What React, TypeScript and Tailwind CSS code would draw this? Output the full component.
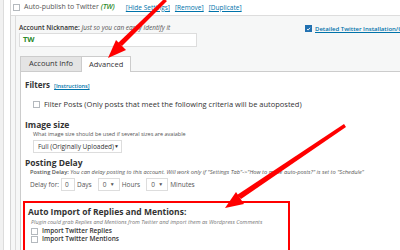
import React from "react";

function Box({ checked = false }: { checked?: boolean }) {
  return (
    <span
      className={
        "inline-flex h-[7px] w-[7px] shrink-0 items-center justify-center border " +
        (checked ? "border-[#2271b1] bg-[#2271b1]" : "border-[#b4b9be] bg-white")
      }
    >
      {checked && (
        <svg viewBox="0 0 10 10" className="h-[6px] w-[6px]">
          <path d="M2 5 L4.2 7.2 L8 2.6" stroke="#fff" strokeWidth="1.8" fill="none" />
        </svg>
      )}
    </span>
  );
}

function Select({ label, w }: { label: string; w: string }) {
  return (
    <span className={"inline-flex h-[13px] shrink-0 items-center justify-between whitespace-nowrap border border-[#ddd] bg-white px-[4px] " + w}>
      <span>{label}</span>
      <span className="text-[5px]">▼</span>
    </span>
  );
}

export default function App() {
  return (
    <div className="relative flex h-[250px] w-[400px] overflow-hidden bg-white text-[#444] [font-family:'Open_Sans',sans-serif]">
      {/* left admin gutter */}
      <div className="w-[4px] shrink-0 border-r border-[#dcdcdc] bg-[#f1f1f1]" />
      <div className="w-[6px] shrink-0 bg-white" />

      <div className="flex min-w-0 flex-1 flex-col border-l border-[#d5d5d5]">
        {/* auto-publish row */}
        <div className="flex h-[16px] shrink-0 items-center gap-[3px] whitespace-nowrap border-b border-[#ddd] bg-white pl-[2px] text-[7px]">
          <Box />
          <span className="ml-[1px] text-[#555]">
            Auto-publish to Twitter <i className="font-semibold text-[#2a8a2a]">(TW)</i>
          </span>
          <span className="ml-[8px] text-[6.5px] text-[#0073aa] underline">[Hide Settings]</span>
          <span className="ml-[2px] text-[6.5px] text-[#0073aa] underline">[Remove]</span>
          <span className="ml-[2px] text-[6.5px] text-[#0073aa] underline">[Duplicate]</span>
        </div>

        {/* settings body */}
        <div className="flex flex-1 bg-[#f6f7f7] pl-[4px]">
          <div className="flex flex-1 flex-col border-l border-[#dcdcdc] pt-[7px]">
            <div className="flex pl-[3px]">
              <div className="flex w-[178px] shrink-0 flex-col">
                <div className="whitespace-nowrap text-[6.5px] leading-[9px] text-[#333]">
                  <b className="font-semibold">Account Nickname:</b> <i className="text-[#555]">Just so you can easily identify it</i>
                </div>
                <div className="mt-[1px] flex h-[14px] items-center border border-[#ddd] bg-white px-[3px] text-[7.5px] font-bold text-[#2a8a2a]">
                  TW
                </div>
              </div>
              <div className="ml-[108px] flex shrink-0 items-start gap-[3px] pt-[2px]">
                <Box checked />
                <span className="whitespace-nowrap text-[6px] font-semibold leading-[8px] text-[#0073aa] underline">
                  Detailed Twitter Installation/Configuration Instructions
                </span>
              </div>
            </div>

            {/* tabs */}
            <div className="mt-[9px] flex pl-[4px]">
              <div className="flex h-[15px] items-center border border-b-0 border-[#ccc] bg-[#e4e4e4] px-[8px] text-[7.5px] text-[#333]">
                Account Info
              </div>
              <div className="relative -mb-[1px] flex h-[16px] items-center border border-b-0 border-l-0 border-[#ccc] bg-white px-[7px] text-[7.5px] text-[#333]">
                Advanced
              </div>
            </div>

            {/* tab content */}
            <div className="ml-[4px] flex flex-1 flex-col border-l border-t border-[#ccc] bg-white pl-[4px] pt-[7px] text-[#333]">
              <div className="flex items-baseline gap-[4px]">
                <span className="text-[8px] font-bold">Filters</span>
                <span className="text-[5.5px] font-semibold text-[#0073aa] underline">[Instructions]</span>
              </div>
              <div className="mt-[8px] flex items-center gap-[4px] whitespace-nowrap pl-[8px] text-[7.5px]">
                <Box />
                <span>Filter Posts (Only posts that meet the following criteria will be autoposted)</span>
              </div>

              <div className="mt-[9px] text-[8.5px] font-bold leading-[11px]">Image size</div>
              <div className="whitespace-nowrap pl-[8px] text-[5.5px] leading-[9px] text-[#555]">
                What image size should be used if several sizes are avaiable
              </div>
              <div className="mt-[1px] flex pl-[8px] text-[6.5px]">
                <Select label="Full (Originally Uploaded)" w="w-[89px]" />
              </div>

              <div className="mt-[4px] text-[8.5px] font-bold leading-[11px]">Posting Delay</div>
              <div className="whitespace-nowrap pl-[5px] text-[5.7px] leading-[9px] text-[#555]">
                <b className="font-semibold">Posting Delay:</b>{" "}
                <i>You can delay posting to this account. Will work only if "Settings Tab"-&gt;"How to make auto-posts?" is set to "Schedule"</i>
              </div>
              <div className="mt-[1px] flex items-center gap-[2px] whitespace-nowrap pl-[5px] text-[6.5px] text-[#555]">
                <span>Delay for:</span>
                <span className="flex h-[13px] w-[14px] items-center border border-[#ddd] pl-[3px]">0</span>
                <span className="mr-[4px]">Days</span>
                <Select label="0" w="w-[22px]" />
                <span className="mr-[4px]">Hours</span>
                <Select label="0" w="w-[22px]" />
                <span>Minutes</span>
              </div>

              <div className="mt-[10px] ml-[-2px] flex h-[60px] w-[267px] flex-col border-2 border-[#f00] pl-[3px] pt-[3px]">
                <div className="text-[8.5px] font-bold leading-[11px]">Auto Import of Replies and Mentions:</div>
                <div className="whitespace-nowrap pl-[3px] text-[5.5px] italic leading-[10px] text-[#777]">
                  Plugin could grab Replies and Mentions from Twitter and import them as Wordpress Comments
                </div>
                <div className="flex items-center gap-[4px] pl-[3px] text-[6.5px] font-semibold leading-[8px]">
                  <Box />
                  <span>Import Twitter Replies</span>
                </div>
                <div className="flex items-center gap-[4px] pl-[3px] text-[6.5px] font-semibold leading-[8px]">
                  <Box />
                  <span>Import Twitter Mentions</span>
                </div>
              </div>
            </div>
          </div>
        </div>
      </div>

      {/* red annotation arrows */}
      <svg className="pointer-events-none absolute left-0 top-0" width="400" height="250" viewBox="0 0 400 250">
        <polygon points="164,-1 167,1 122,46 118,43" fill="#f00" />
        <polygon points="108,58 126,50 116,40" fill="#f00" />
        <polygon points="344,124 346,127 241,199 237,195" fill="#f00" />
        <polygon points="225,208 244,204 236,192" fill="#f00" />
      </svg>
    </div>
  );
}
